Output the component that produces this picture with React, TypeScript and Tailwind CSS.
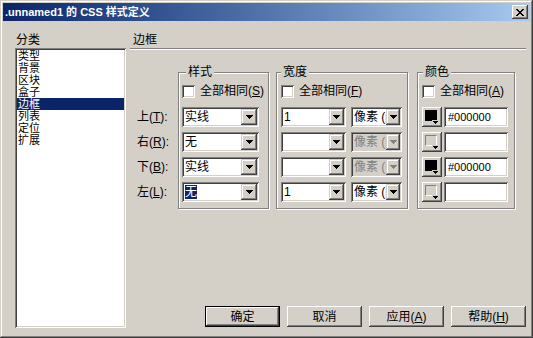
import type { ReactNode } from 'react';

const sunken =
  'shadow-[inset_1px_1px_0_#808080,inset_-1px_-1px_0_#ffffff,inset_2px_2px_0_#404040,inset_-2px_-2px_0_#d4d0c8]';
const raised =
  'shadow-[inset_-1px_-1px_0_#404040,inset_1px_1px_0_#d4d0c8,inset_-2px_-2px_0_#808080,inset_2px_2px_0_#ffffff]';
const buttonRaised =
  'shadow-[inset_-1px_-1px_0_#404040,inset_1px_1px_0_#ffffff,inset_-2px_-2px_0_#808080,inset_2px_2px_0_#d4d0c8]';

function Arrow({ color = '#000000' }: { color?: string }) {
  return (
    <svg width="7" height="4" viewBox="0 0 7 4" shapeRendering="crispEdges">
      <path d="M0 0h7v1H0zM1 1h5v1H1zM2 2h3v1H2zM3 3h1v1H3z" fill={color} />
    </svg>
  );
}

function Key({ k }: { k: string }) {
  return (
    <>
      (<span className="underline underline-offset-1">{k}</span>)
    </>
  );
}

function Select({
  width,
  btn,
  children,
  disabled,
}: {
  width: string;
  btn: string;
  children?: ReactNode;
  disabled?: boolean;
}) {
  return (
    <div className={`flex h-[20px] p-[2px] ${width} ${sunken} ${disabled ? 'bg-[#d4d0c8] text-[#808080]' : 'bg-white'}`}>
      <div className="flex-1 overflow-hidden whitespace-nowrap pl-[1px] leading-[16px]">{children}</div>
      <div className={`flex h-[16px] items-center justify-center bg-[#d4d0c8] ${btn} ${raised}`}>
        <Arrow color={disabled ? '#808080' : '#000000'} />
      </div>
    </div>
  );
}

function Checkbox({ children }: { children: ReactNode }) {
  return (
    <div className="flex h-[13px] items-center gap-[5px] whitespace-nowrap leading-[13px]">
      <div className={`h-[13px] w-[13px] bg-white ${sunken}`} />
      <span>{children}</span>
    </div>
  );
}

function Group({
  title,
  className,
  labelLeft,
  children,
}: {
  title: string;
  className: string;
  labelLeft: string;
  children: ReactNode;
}) {
  return (
    <div className={`relative flex flex-col border border-[#808080] pt-[12px] pb-[6px] shadow-[1px_1px_0_#ffffff,inset_1px_1px_0_#ffffff] ${className}`}>
      <span className={`absolute -top-[7px] bg-[#d4d0c8] px-[2px] leading-[12px] ${labelLeft}`}>{title}</span>
      {children}
    </div>
  );
}

function Swatch({ filled }: { filled?: boolean }) {
  return (
    <div className={`relative h-[20px] w-[20px] bg-[#d4d0c8] pt-[3px] pl-[3px] ${buttonRaised}`}>
      {filled ? (
        <div className="h-[11px] w-[12px] bg-black" />
      ) : (
        <div className="h-[11px] w-[12px] border-t border-l border-[#808080] border-r border-b border-r-white border-b-white" />
      )}
      <div className="absolute right-[3px] bottom-[3px] flex h-[4px] w-[7px] bg-[#d4d0c8]">
        <svg width="5" height="3" viewBox="0 0 5 3" shapeRendering="crispEdges" className="m-auto">
          <path d="M0 0h5v1H0zM1 1h3v1H1zM2 2h1v1H2z" fill="#000" />
        </svg>
      </div>
    </div>
  );
}

function ColorInput({ value }: { value?: string }) {
  return (
    <div className={`h-[20px] w-[64px] bg-white pl-[4px] font-['Liberation_Sans',sans-serif] text-[11px] leading-[20px] ${sunken}`}>
      {value}
    </div>
  );
}

function DialogButton({ children, primary }: { children: ReactNode; primary?: boolean }) {
  return (
    <div className={`h-[21px] w-[75px] ${primary ? 'border border-black' : ''}`}>
      <div className={`flex h-full w-full items-center justify-center bg-[#d4d0c8] leading-[14px] ${buttonRaised}`}>
        {children}
      </div>
    </div>
  );
}

const categories = ['类型', '背景', '区块', '盒子', '边框', '列表', '定位', '扩展'];

export default function App() {
  return (
    <div className="flex h-[338px] w-[533px] flex-col bg-[#d4d0c8] p-[3px] font-['Liberation_Sans','Noto_Sans_CJK_SC',sans-serif] text-[12px] text-black shadow-[inset_-1px_-1px_0_#404040,inset_1px_1px_0_#d4d0c8,inset_-2px_-2px_0_#808080,inset_2px_2px_0_#ffffff]">
      {/* title bar */}
      <div className="flex h-[18px] items-center justify-between bg-linear-to-r from-[#0a246a] to-[#a6caf0] pl-[2px] pr-[2px]">
        <span className="whitespace-nowrap text-[11px] font-bold leading-[18px] text-white">.unnamed1 的 CSS 样式定义</span>
        <div className={`flex h-[14px] w-[16px] items-center justify-center bg-[#d4d0c8] ${buttonRaised}`}>
          <svg width="8" height="7" viewBox="0 0 8 7" shapeRendering="crispEdges">
            <path
              d="M0 0h2v1H0zM6 0h2v1H6zM1 1h2v1H1zM5 1h2v1H5zM2 2h4v1H2zM3 3h2v1H3zM2 4h4v1H2zM1 5h2v1H1zM5 5h2v1H5zM0 6h2v1H0zM6 6h2v1H6z"
              fill="#000"
            />
          </svg>
        </div>
      </div>

      <div className="flex min-h-0 flex-1">
        {/* category list */}
        <div className="flex flex-col pt-[11px] pb-[7px] pl-[12px]">
          <div className="h-[16px] pl-[1px] leading-[16px]">分类</div>
          <div className={`flex w-[111px] flex-1 flex-col bg-white p-[2px] ${sunken}`}>
            {categories.map((c) => (
              <div
                key={c}
                className={`h-[12px] overflow-hidden pl-[1px] text-[11px] leading-[12px] ${c === '边框' ? 'bg-[#0a246a] text-white' : ''}`}
              >
                {c}
              </div>
            ))}
          </div>
        </div>

        {/* border panel */}
        <div className="ml-[4px] flex flex-1 flex-col pt-[11px] pr-[4px] pb-[8px]">
          <div className="h-[16px] pl-[3px] leading-[16px]">边框</div>
          <div className="h-[2px] border-t border-b border-t-[#808080] border-b-white" />

          <div className="mt-[22px] flex items-start">
            <div className="flex w-[48px] flex-col gap-[5px] pt-[35px] pl-[7px]">
              <div className="h-[20px] whitespace-nowrap leading-[20px]">上<Key k="T" />:</div>
              <div className="h-[20px] whitespace-nowrap leading-[20px]">右<Key k="R" />:</div>
              <div className="h-[20px] whitespace-nowrap leading-[20px]">下<Key k="B" />:</div>
              <div className="h-[20px] whitespace-nowrap leading-[20px]">左<Key k="L" />:</div>
            </div>

            <Group title="样式" className="w-[91px] pl-[3px]" labelLeft="left-[7px]">
              <Checkbox>
                全部相同<Key k="S" />
              </Checkbox>
              <div className="mt-[9px] flex flex-col gap-[5px]">
                <Select width="w-[77px]" btn="w-[16px]">实线</Select>
                <Select width="w-[77px]" btn="w-[16px]">无</Select>
                <Select width="w-[77px]" btn="w-[16px]">实线</Select>
                <Select width="w-[77px]" btn="w-[16px]">
                  <span className="bg-[#0a246a] text-white">无</span>
                </Select>
              </div>
            </Group>

            <Group title="宽度" className="ml-[7px] w-[132px] pl-[4px]" labelLeft="left-[4px]">
              <Checkbox>
                全部相同<Key k="F" />
              </Checkbox>
              <div className="mt-[9px] flex flex-col gap-[5px]">
                <div className="flex gap-[5px]">
                  <Select width="w-[65px]" btn="w-[15px]">1</Select>
                  <Select width="w-[51px]" btn="w-[14px]">像素 (px)</Select>
                </div>
                <div className="flex gap-[5px]">
                  <Select width="w-[65px]" btn="w-[15px]" />
                  <Select width="w-[51px]" btn="w-[14px]" disabled>像素 (px)</Select>
                </div>
                <div className="flex gap-[5px]">
                  <Select width="w-[65px]" btn="w-[15px]" />
                  <Select width="w-[51px]" btn="w-[14px]" disabled>像素 (px)</Select>
                </div>
                <div className="flex gap-[5px]">
                  <Select width="w-[65px]" btn="w-[15px]">1</Select>
                  <Select width="w-[51px]" btn="w-[14px]">像素 (px)</Select>
                </div>
              </div>
            </Group>

            <Group title="颜色" className="ml-[9px] w-[98px] pl-[4px]" labelLeft="left-[5px]">
              <Checkbox>
                全部相同<Key k="A" />
              </Checkbox>
              <div className="mt-[9px] flex flex-col gap-[5px]">
                <div className="flex gap-[2px]">
                  <Swatch filled />
                  <ColorInput value="#000000" />
                </div>
                <div className="flex gap-[2px]">
                  <Swatch />
                  <ColorInput />
                </div>
                <div className="flex gap-[2px]">
                  <Swatch filled />
                  <ColorInput value="#000000" />
                </div>
                <div className="flex gap-[2px]">
                  <Swatch />
                  <ColorInput />
                </div>
              </div>
            </Group>
          </div>

          <div className="mt-auto flex justify-end gap-[7px]">
            <DialogButton primary>确定</DialogButton>
            <DialogButton>取消</DialogButton>
            <DialogButton>
              应用<Key k="A" />
            </DialogButton>
            <DialogButton>
              帮助<Key k="H" />
            </DialogButton>
          </div>
        </div>
      </div>
    </div>
  );
}
